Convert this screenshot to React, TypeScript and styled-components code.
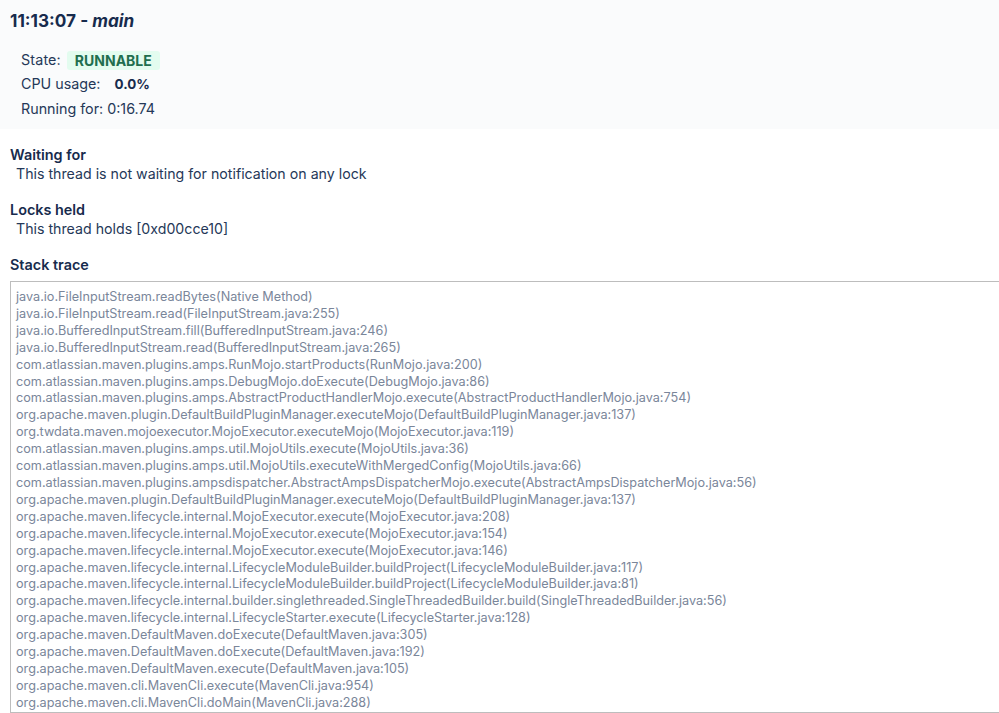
import React from 'react'
import styled, { createGlobalStyle } from 'styled-components'

const GlobalStyle = createGlobalStyle`
  html, body {
    margin: 0;
    padding: 0;
    background: #fff;
    overflow: hidden;
  }
  body {
    font-family: Inter, "Liberation Sans", sans-serif;
    color: #172b4d;
  }
`

const Page = styled.div`
  width: 999px;
  height: 713px;
  overflow: hidden;
`

const Header = styled.div`
  height: 129px;
  box-sizing: border-box;
  background: #fafbfc;
  padding: 9px 10px 0;
`

const Title = styled.h1`
  margin: 0;
  font-size: 17.2px;
  line-height: 24px;
  font-weight: 700;
  color: #172b4d;
`

const Facts = styled.div`
  margin-top: 15px;
  padding-left: 11px;
  font-size: 14.3px;
  line-height: 24.3px;
  color: #253858;
`

const Fact = styled.div`
  display: flex;
  align-items: center;
`

const Label = styled.span`
  letter-spacing: 0.15px;
`

const Lozenge = styled.span`
  margin-left: 6px;
  padding: 0 8px;
  border-radius: 3px;
  background: #e3fcef;
  color: #216e4e;
  font-size: 14px;
  line-height: 19px;
  font-weight: 700;
`

const Strong = styled.strong`
  margin-left: 14px;
  font-size: 13.4px;
  font-weight: 700;
  color: #172b4d;
`

const Section = styled.section`
  padding: 0 0 0 10px;
  margin-top: 16px;
`

const Heading = styled.h2`
  margin: 0;
  font-size: 14.4px;
  line-height: 20px;
  font-weight: 600;
  color: #172b4d;
`

const Detail = styled.div`
  padding: 0 0 1px 6px;
  font-size: 14.2px;
  line-height: 18px;
  color: #253858;
`

const Trace = styled.div`
  margin-top: 6px;
  width: 1000px;
  height: 432px;
  box-sizing: border-box;
  overflow: hidden;
  padding: 7px 5px;
  border: 1.5px solid #bdbdbd;
  font-size: 12.67px;
  line-height: 16.9px;
  color: #7a869a;
  white-space: pre;
`

const stack = [
  'java.io.FileInputStream.readBytes(Native Method)',
  'java.io.FileInputStream.read(FileInputStream.java:255)',
  'java.io.BufferedInputStream.fill(BufferedInputStream.java:246)',
  'java.io.BufferedInputStream.read(BufferedInputStream.java:265)',
  'com.atlassian.maven.plugins.amps.RunMojo.startProducts(RunMojo.java:200)',
  'com.atlassian.maven.plugins.amps.DebugMojo.doExecute(DebugMojo.java:86)',
  'com.atlassian.maven.plugins.amps.AbstractProductHandlerMojo.execute(AbstractProductHandlerMojo.java:754)',
  'org.apache.maven.plugin.DefaultBuildPluginManager.executeMojo(DefaultBuildPluginManager.java:137)',
  'org.twdata.maven.mojoexecutor.MojoExecutor.executeMojo(MojoExecutor.java:119)',
  'com.atlassian.maven.plugins.amps.util.MojoUtils.execute(MojoUtils.java:36)',
  'com.atlassian.maven.plugins.amps.util.MojoUtils.executeWithMergedConfig(MojoUtils.java:66)',
  'com.atlassian.maven.plugins.ampsdispatcher.AbstractAmpsDispatcherMojo.execute(AbstractAmpsDispatcherMojo.java:56)',
  'org.apache.maven.plugin.DefaultBuildPluginManager.executeMojo(DefaultBuildPluginManager.java:137)',
  'org.apache.maven.lifecycle.internal.MojoExecutor.execute(MojoExecutor.java:208)',
  'org.apache.maven.lifecycle.internal.MojoExecutor.execute(MojoExecutor.java:154)',
  'org.apache.maven.lifecycle.internal.MojoExecutor.execute(MojoExecutor.java:146)',
  'org.apache.maven.lifecycle.internal.LifecycleModuleBuilder.buildProject(LifecycleModuleBuilder.java:117)',
  'org.apache.maven.lifecycle.internal.LifecycleModuleBuilder.buildProject(LifecycleModuleBuilder.java:81)',
  'org.apache.maven.lifecycle.internal.builder.singlethreaded.SingleThreadedBuilder.build(SingleThreadedBuilder.java:56)',
  'org.apache.maven.lifecycle.internal.LifecycleStarter.execute(LifecycleStarter.java:128)',
  'org.apache.maven.DefaultMaven.doExecute(DefaultMaven.java:305)',
  'org.apache.maven.DefaultMaven.doExecute(DefaultMaven.java:192)',
  'org.apache.maven.DefaultMaven.execute(DefaultMaven.java:105)',
  'org.apache.maven.cli.MavenCli.execute(MavenCli.java:954)',
  'org.apache.maven.cli.MavenCli.doMain(MavenCli.java:288)',
]

export default function App() {
  return (
    <Page>
      <GlobalStyle />
      <Header>
        <Title>11:13:07 - <em>main</em></Title>
        <Facts>
          <Fact><Label>State:</Label> <Lozenge>RUNNABLE</Lozenge></Fact>
          <Fact>CPU usage: <Strong>0.0%</Strong></Fact>
          <Fact>Running for: 0:16.74</Fact>
        </Facts>
      </Header>
      <Section>
        <Heading>Waiting for</Heading>
        <Detail>This thread is not waiting for notification on any lock</Detail>
      </Section>
      <Section>
        <Heading>Locks held</Heading>
        <Detail>This thread holds [0xd00cce10]</Detail>
      </Section>
      <Section>
        <Heading>Stack trace</Heading>
        <Trace>{stack.join('\n')}</Trace>
      </Section>
    </Page>
  )
}
